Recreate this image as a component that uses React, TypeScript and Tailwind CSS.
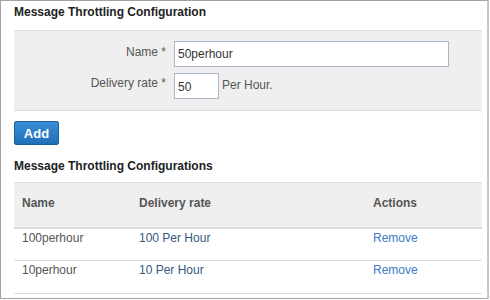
import React, { useState } from "react";

type Throttle = { name: string; rate: string };

const rows: Throttle[] = [
  { name: "100perhour", rate: "100 Per Hour" },
  { name: "10perhour", rate: "10 Per Hour" },
];

const App: React.FC = () => {
  const [name, setName] = useState("50perhour");
  const [rate, setRate] = useState("50");

  return (
    <div
      className="w-[490px] h-[300px] bg-white overflow-hidden"
      style={{ fontFamily: '"Liberation Sans", Arial, sans-serif' }}
    >
      <div className="w-[489px] h-[299px] border border-[#a3a3a3] border-r-2 border-r-[#c8c8c8] pl-[13px] text-[12px] text-[#333]">
        <div className="w-[468px]">
          <h3 className="font-bold text-[12px] leading-[14px] pt-[4px] h-[29px] text-[#222]">
            Message Throttling Configuration
          </h3>

          <div className="bg-[#efefef] border-y border-[#dcdcdc] h-[81px] pt-[10px]">
            <div className="flex items-start h-[26px]">
              <label className="w-[160px] text-right pr-[8px] leading-[14px] mt-[4px] text-[#555]">Name *</label>
              <input
                className="w-[275px] h-[26px] border border-[#a8b8c8] bg-white px-[3px] text-[12px] text-[#333] outline-none"
                value={name}
                onChange={(e) => setName(e.target.value)}
              />
            </div>
            <div className="flex items-start h-[27px] mt-[6px]">
              <label className="w-[160px] text-right pr-[8px] leading-[14px] mt-[3px] text-[#555]">Delivery rate *</label>
              <input
                className="w-[45px] h-[26px] border border-[#a8b8c8] bg-white px-[3px] pt-[1px] text-[12px] text-[#333] outline-none"
                value={rate}
                onChange={(e) => setRate(e.target.value)}
              />
              <span className="ml-[3px] leading-[14px] mt-[5px] text-[#555]">Per Hour.</span>
            </div>
          </div>

          <button className="mt-[10px] w-[45px] h-[24px] rounded-[2px] border border-[#1d5f99] bg-gradient-to-b from-[#3a8fd6] to-[#1f6fb8] text-white font-bold text-[13px] leading-none">
            Add
          </button>

          <h3 className="font-bold text-[12px] leading-[14px] mt-[14px] h-[23px] text-[#222]">
            Message Throttling Configurations
          </h3>

          <table className="w-full table-fixed border-collapse text-[12px]">
            <thead>
              <tr className="bg-[#efefef] border-t border-[#dcdcdc] border-b-2 border-b-[#dcdcdc] h-[45px]">
                <th className="w-1/4 text-left font-bold pl-[8px] pb-[4px] text-[#555]">Name</th>
                <th className="w-1/2 text-left font-bold pl-[8px] pb-[4px] text-[#555]">Delivery rate</th>
                <th className="w-1/4 text-left font-bold pl-[8px] pb-[4px] text-[#555]">Actions</th>
              </tr>
            </thead>
            <tbody>
              {rows.map((r) => (
                <tr key={r.name} className="border-b border-[#dcdcdc] h-[33px]">
                  <td className="pl-[8px] align-top pt-[2px] leading-[14px] text-[#555]">{r.name}</td>
                  <td className="pl-[8px] align-top pt-[2px] leading-[14px] text-[#34587e]">{r.rate}</td>
                  <td className="pl-[8px] align-top pt-[2px] leading-[14px]">
                    <a href="#" className="text-[#3a7bc8]">
                      Remove
                    </a>
                  </td>
                </tr>
              ))}
            </tbody>
          </table>
        </div>
      </div>
    </div>
  );
};

export default App;
